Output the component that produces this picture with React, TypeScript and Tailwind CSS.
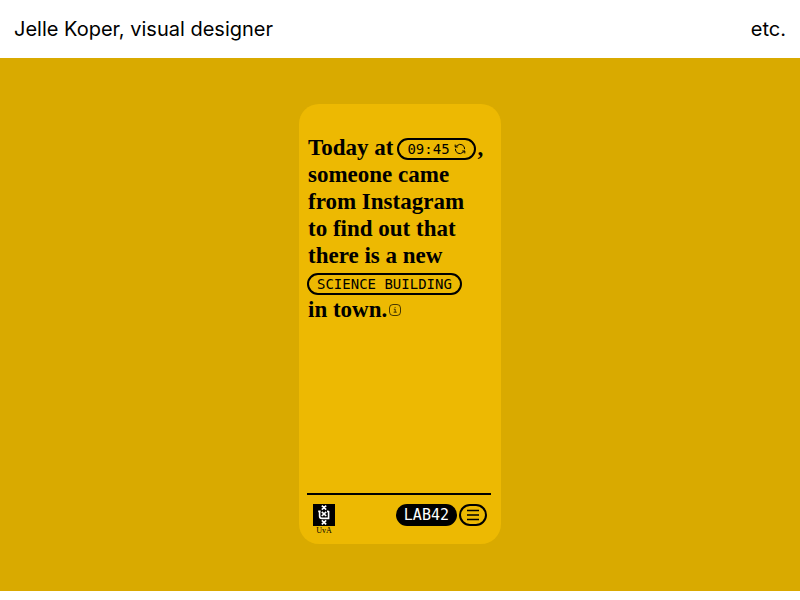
const serif = 'font-["Liberation_Serif",serif]'
const mono = 'font-["DejaVu_Sans_Mono",monospace]'

const RefreshIcon = () => (
    <svg className="w-3 h-3" viewBox="0 0 12 12" fill="none" stroke="currentColor" strokeWidth="1" aria-hidden="true">
        <path d="M3.2 2.6A4.4 4.4 0 0 1 10.6 6.2M8.8 9.4A4.4 4.4 0 0 1 1.4 5.8" />
        <path d="M1.2 1.6V4H3.8M10.8 10.4V8H8.2M1.4 4L3.2 2.4M10.6 8L8.8 9.6" />
    </svg>
)

const InfoIcon = () => (
    <svg className="w-3 h-3" viewBox="0 0 12 12" fill="none" stroke="currentColor" strokeWidth="0.7" aria-hidden="true">
        <rect x="0.5" y="0.5" width="11" height="11" rx="3.5" />
        <path d="M4.8 5.2H6.2V8.2M4.6 8.2H7.8M5.6 3.4H6.6" />
    </svg>
)

const MenuIcon = () => (
    <svg className="w-3 h-3" viewBox="0 0 12 12" stroke="currentColor" strokeWidth="1.4" aria-hidden="true">
        <path d="M0 1.5H12M0 6H12M0 10.5H12" />
    </svg>
)

const UvaMark = () => (
    <svg className="w-[22px] h-[22px]" viewBox="0 0 22 22" fill="none" aria-hidden="true">
        <rect width="22" height="22" fill="#000" />
        <g stroke="#fff" strokeWidth="1.6">
            <path d="M8.8 1.6L13.2 5.6M13.2 1.6L8.8 5.6M8.8 7.8L13.2 12M13.2 7.8L8.8 12M8.8 16.4L13.2 20.4M13.2 16.4L8.8 20.4" />
            <path d="M6.6 7V12Q6.6 14.4 9 14.4H15.6V7M5.2 7.4H7.6M14 7.4H15.6" />
        </g>
    </svg>
)

const PhoneCard = () => {
    return (
        <article className="flex flex-col w-[202px] min-h-[440px] rounded-[20px] bg-[#edb902] px-2 pt-[30px] pb-2">
            <h1 className={`${serif} text-[23px] leading-[27px] font-bold pl-px`}>
                <span className="flex items-end gap-1 whitespace-nowrap">
                    Today at
                    <button type="button" className={`${mono} flex items-center justify-center gap-1 h-[22px] mb-px px-2 rounded-full border-2 border-black text-[14px] leading-4 font-normal`}>
                        09:45
                        <RefreshIcon />
                    </button>
                    <span className="-ml-0.5">,</span>
                </span>
                <span className="block">someone came</span>
                <span className="block">from Instagram</span>
                <span className="block">to find out that</span>
                <span className="block">there is a new</span>
                <span className="flex items-end h-[27px]">
                    <button type="button" className={`${mono} -ml-px mb-px flex items-center h-[22px] px-2 rounded-full border-2 border-black text-[14px] leading-4 font-normal whitespace-nowrap`}>
                        SCIENCE BUILDING
                    </button>
                </span>
                <span className="flex items-center gap-0.5">
                    in town.
                    <button type="button" aria-label="More information"><InfoIcon /></button>
                </span>
            </h1>

            <footer className="mt-auto mr-0.5 flex items-start justify-between border-t-2 border-black pt-[9px] pl-1.5 pr-1">
                <a href="#uva" className={`${serif} flex flex-col items-center text-[8px] leading-[10px]`}>
                    <UvaMark />
                    UvA
                </a>
                <div className="flex items-center gap-0.5">
                    <a href="#lab42" className={`${mono} flex items-center h-[22px] px-2 rounded-full bg-black text-white text-[15px] leading-4`}>LAB42</a>
                    <button type="button" aria-label="Menu" className="flex items-center justify-center w-7 h-[22px] rounded-full border-2 border-black">
                        <MenuIcon />
                    </button>
                </div>
            </footer>
        </article>
    )
}

const App = () => {
    return (
        <div className="min-h-screen bg-white text-black">
            <header className='flex items-center justify-between h-[58px] px-3.5 font-["Inter",sans-serif] text-[20px] leading-7'>
                <a href="#home">Jelle Koper, visual designer</a>
                <a href="#etc">etc.</a>
            </header>
            <main className="flex items-start justify-center bg-[#d9aa00] pt-[46px] pb-[47px]">
                <PhoneCard />
            </main>
        </div>
    )
}

export default App
